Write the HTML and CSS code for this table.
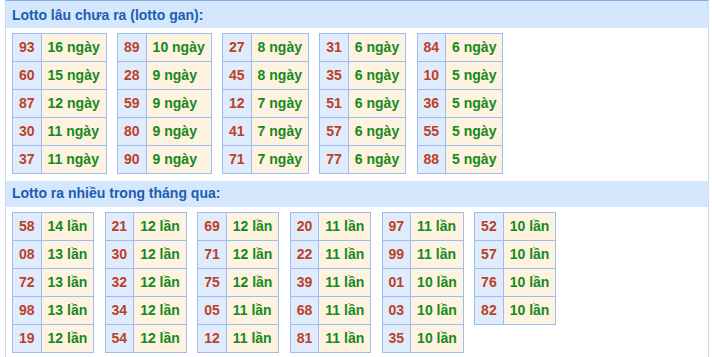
FILE: index.html
```html
<!DOCTYPE html>
<html lang="vi">
<head>
<meta charset="utf-8">
<title>Lotto</title>
<link rel="stylesheet" href="styles.css">
</head>
<body>
<div class="box">
  <div class="head head-first">Lotto lâu chưa ra (lotto gan):</div>
  <div class="tables">
    <table><tr><td class="n">93</td><td class="d">16 ngày</td></tr><tr><td class="n">60</td><td class="d">15 ngày</td></tr><tr><td class="n">87</td><td class="d">12 ngày</td></tr><tr><td class="n">30</td><td class="d">11 ngày</td></tr><tr><td class="n">37</td><td class="d">11 ngày</td></tr></table>
    <table><tr><td class="n">89</td><td class="d">10 ngày</td></tr><tr><td class="n">28</td><td class="d">9 ngày</td></tr><tr><td class="n">59</td><td class="d">9 ngày</td></tr><tr><td class="n">80</td><td class="d">9 ngày</td></tr><tr><td class="n">90</td><td class="d">9 ngày</td></tr></table>
    <table><tr><td class="n">27</td><td class="d">8 ngày</td></tr><tr><td class="n">45</td><td class="d">8 ngày</td></tr><tr><td class="n">12</td><td class="d">7 ngày</td></tr><tr><td class="n">41</td><td class="d">7 ngày</td></tr><tr><td class="n">71</td><td class="d">7 ngày</td></tr></table>
    <table><tr><td class="n">31</td><td class="d">6 ngày</td></tr><tr><td class="n">35</td><td class="d">6 ngày</td></tr><tr><td class="n">51</td><td class="d">6 ngày</td></tr><tr><td class="n">57</td><td class="d">6 ngày</td></tr><tr><td class="n">77</td><td class="d">6 ngày</td></tr></table>
    <table><tr><td class="n">84</td><td class="d">6 ngày</td></tr><tr><td class="n">10</td><td class="d">5 ngày</td></tr><tr><td class="n">36</td><td class="d">5 ngày</td></tr><tr><td class="n">55</td><td class="d">5 ngày</td></tr><tr><td class="n">88</td><td class="d">5 ngày</td></tr></table>
  </div>
  <div class="head">Lotto ra nhiều trong tháng qua:</div>
  <div class="tables">
    <table><tr><td class="n">58</td><td class="d">14 lần</td></tr><tr><td class="n">08</td><td class="d">13 lần</td></tr><tr><td class="n">72</td><td class="d">13 lần</td></tr><tr><td class="n">98</td><td class="d">13 lần</td></tr><tr><td class="n">19</td><td class="d">12 lần</td></tr></table>
    <table><tr><td class="n">21</td><td class="d">12 lần</td></tr><tr><td class="n">30</td><td class="d">12 lần</td></tr><tr><td class="n">32</td><td class="d">12 lần</td></tr><tr><td class="n">34</td><td class="d">12 lần</td></tr><tr><td class="n">54</td><td class="d">12 lần</td></tr></table>
    <table><tr><td class="n">69</td><td class="d">12 lần</td></tr><tr><td class="n">71</td><td class="d">12 lần</td></tr><tr><td class="n">75</td><td class="d">12 lần</td></tr><tr><td class="n">05</td><td class="d">11 lần</td></tr><tr><td class="n">12</td><td class="d">11 lần</td></tr></table>
    <table><tr><td class="n">20</td><td class="d">11 lần</td></tr><tr><td class="n">22</td><td class="d">11 lần</td></tr><tr><td class="n">39</td><td class="d">11 lần</td></tr><tr><td class="n">68</td><td class="d">11 lần</td></tr><tr><td class="n">81</td><td class="d">11 lần</td></tr></table>
    <table><tr><td class="n">97</td><td class="d">11 lần</td></tr><tr><td class="n">99</td><td class="d">11 lần</td></tr><tr><td class="n">01</td><td class="d">10 lần</td></tr><tr><td class="n">03</td><td class="d">10 lần</td></tr><tr><td class="n">35</td><td class="d">10 lần</td></tr></table>
    <table><tr><td class="n">52</td><td class="d">10 lần</td></tr><tr><td class="n">57</td><td class="d">10 lần</td></tr><tr><td class="n">76</td><td class="d">10 lần</td></tr><tr><td class="n">82</td><td class="d">10 lần</td></tr></table>
  </div>
</div>
</body>
</html>
```
FILE: styles.css
```css
html, body {
  margin: 0;
  padding: 0;
  background: #ffffff;
}
body {
  font-family: "Liberation Sans", Arial, sans-serif;
  font-size: 14px;
  font-weight: bold;
}
.box {
  margin: 0 3px 0 5px;
  border: 1px solid #c6daf4;
  border-top: 1px solid #86aee6;
  min-height: 362px;
  box-sizing: border-box;
}
.head {
  background: #d4e7fc;
  color: #1c5db4;
  height: 26px;
  line-height: 25px;
  padding-left: 6px;
}
.head-first {
  height: 25px;
  padding-top: 2px;
}
.tables {
  display: flex;
  align-items: flex-start;
  gap: 10.3px;
  padding: 5px 0 7px 6px;
}
table {
  border-collapse: collapse;
}
td {
  border: 1px solid #9bbdf3;
  height: 27px;
  padding: 0 6px;
  line-height: 27px;
  white-space: nowrap;
}
td.n {
  background: #e0ecfc;
  color: #bb4128;
  text-align: center;
}
td.d {
  background: #fef3e1;
  color: #17891b;
  text-align: left;
}
```
